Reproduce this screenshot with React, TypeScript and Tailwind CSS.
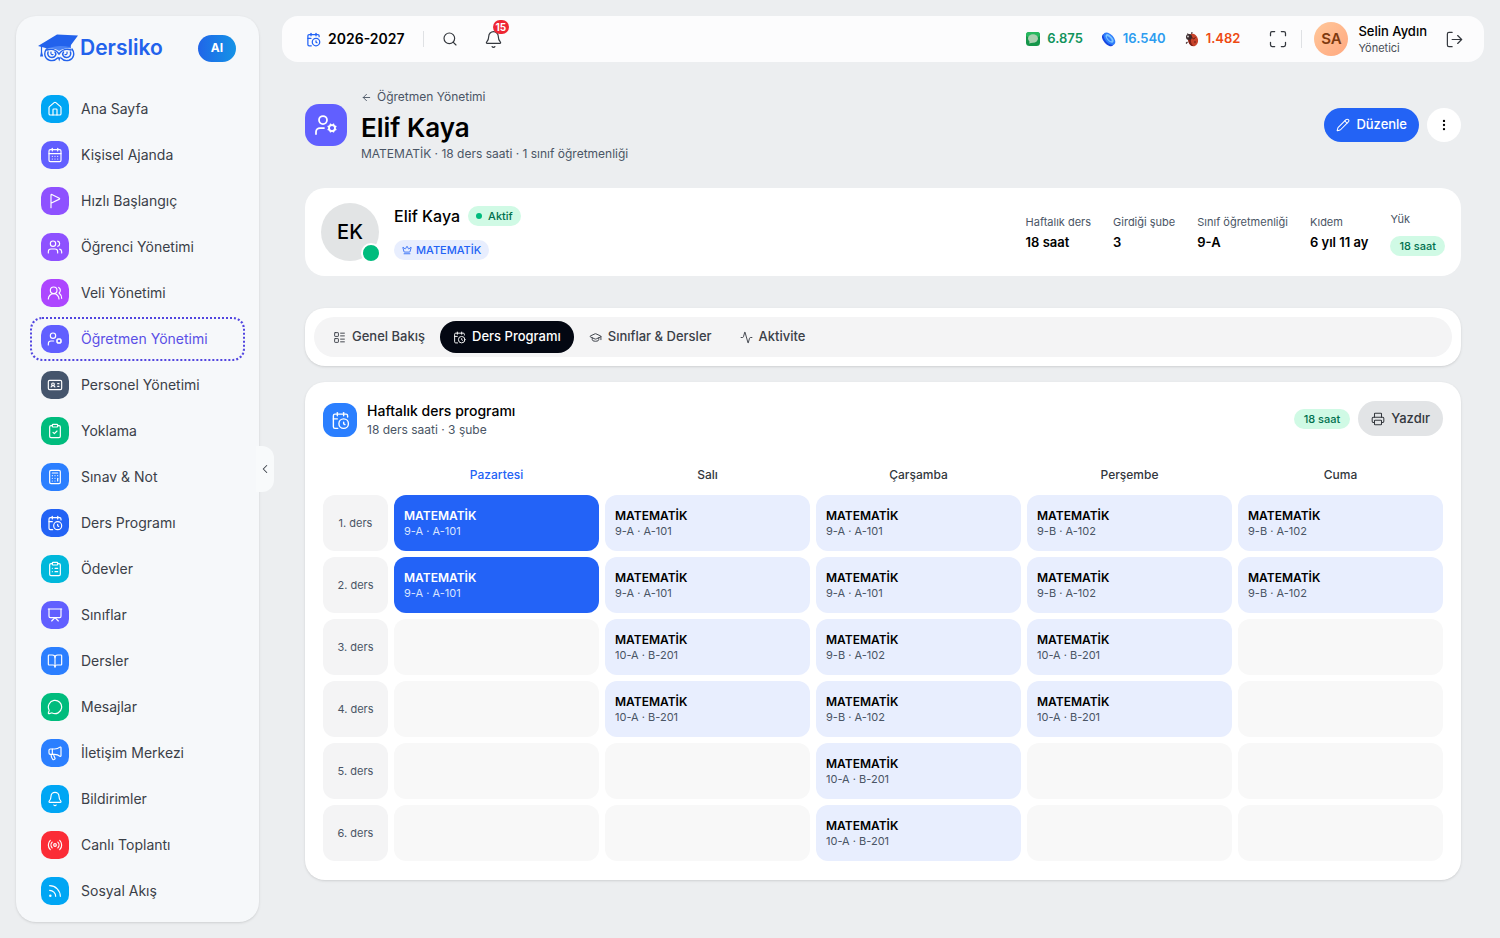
import * as React from 'react';
import {
  Activity, ArrowLeft, Bell, BookOpen, Calculator, CalendarClock, CalendarDays, ChevronLeft, ClipboardCheck,
  ClipboardList, Crown, EllipsisVertical, FlagTriangleRight, GraduationCap, House, IdCard, LayoutList, LogOut,
  Maximize, Megaphone, MessageCircle, Pencil, Presentation, Printer, Radio, Rss, Search, UserCog, Users, UsersRound,
} from 'lucide-react';

const menu = [
  { label: 'Ana Sayfa', icon: House, color: 'bg-[#00a6f4]' },
  { label: 'Kişisel Ajanda', icon: CalendarDays, color: 'bg-[#615fff]' },
  { label: 'Hızlı Başlangıç', icon: FlagTriangleRight, color: 'bg-[#8e51ff]' },
  { label: 'Öğrenci Yönetimi', icon: Users, color: 'bg-[#8e51ff]' },
  { label: 'Veli Yönetimi', icon: UsersRound, color: 'bg-[#ad46ff]' },
  { label: 'Öğretmen Yönetimi', icon: UserCog, color: 'bg-[#615fff]', active: true },
  { label: 'Personel Yönetimi', icon: IdCard, color: 'bg-[#45556c]' },
  { label: 'Yoklama', icon: ClipboardCheck, color: 'bg-[#00bc7d]' },
  { label: 'Sınav & Not', icon: Calculator, color: 'bg-[#2b7fff]' },
  { label: 'Ders Programı', icon: CalendarClock, color: 'bg-[#2363f5]' },
  { label: 'Ödevler', icon: ClipboardList, color: 'bg-[#00b8db]' },
  { label: 'Sınıflar', icon: Presentation, color: 'bg-[#615fff]' },
  { label: 'Dersler', icon: BookOpen, color: 'bg-[#2b7fff]' },
  { label: 'Mesajlar', icon: MessageCircle, color: 'bg-[#00bc7d]' },
  { label: 'İletişim Merkezi', icon: Megaphone, color: 'bg-[#2b7fff]' },
  { label: 'Bildirimler', icon: Bell, color: 'bg-[#00a6f4]' },
  { label: 'Canlı Toplantı', icon: Radio, color: 'bg-[#fb2c36]' },
  { label: 'Sosyal Akış', icon: Rss, color: 'bg-[#00a6f4]' },
];

const stats = [
  { label: 'Haftalık ders', value: '18 saat' },
  { label: 'Girdiği şube', value: '3' },
  { label: 'Sınıf öğretmenliği', value: '9-A' },
  { label: 'Kıdem', value: '6 yıl 11 ay' },
];

const tabs = [
  { label: 'Genel Bakış', icon: LayoutList },
  { label: 'Ders Programı', icon: CalendarClock, active: true },
  { label: 'Sınıflar & Dersler', icon: GraduationCap },
  { label: 'Aktivite', icon: Activity },
];

const days = ['Pazartesi', 'Salı', 'Çarşamba', 'Perşembe', 'Cuma'];

const A = '9-A · A-101';
const B = '9-B · A-102';
const C = '10-A · B-201';
const lessons = [
  [A, A, A, B, B],
  [A, A, A, B, B],
  ['', C, B, C, ''],
  ['', C, B, C, ''],
  ['', '', C, '', ''],
  ['', '', C, '', ''],
];

const Logo = () => (
  <svg viewBox="0 0 40 28" className="h-7 w-10" aria-hidden="true">
    <g fill="none" stroke="#2262ec" strokeLinecap="round">
      <path d="M8.500 15c-3 4-2 10 3 11.300 3 .7 6 0 8-2.300M34 15c3 4 2 10-3 11.300-3 .7-6 0-8-2.300" strokeWidth="1.400" />
      <path d="M10 18c-1 3 1 5.500 4 5.500s5-3 3-5.500M32.500 18c1 3-1 5.500-4 5.500s-5-3-3-5.500" strokeWidth="1.500" />
      <path d="M9 16c4-1.500 9-.5 12 4 3-4.500 8-5.500 12-4" strokeWidth="1.500" />
      <path d="M13 18c-.5 2 .5 3 2 2.500M29 18c.5 2-.5 3-2 2.500" strokeWidth="1.200" />
    </g>
    <path d="M19.500 22.500l1.700 1 1.700-1-1.700 5z" fill="#2262ec" />
    <path d="M9 10l24-1v5.500c-4-.8-8 0-12 2.500-4-2.500-8-3-12-2z" fill="#4a83f5" />
    <path d="M0 12L19 0.500l21 1L31.500 13c-8-2-16-1-22 1.500z" fill="#2262ec" />
    <path d="M3.500 12v7" stroke="#2262ec" strokeWidth="1.200" />
    <path d="M3.500 16l1.700 6.500H2z" fill="#2262ec" />
  </svg>
);

const Gem = () => (
  <svg viewBox="0 0 16 16" className="size-4" aria-hidden="true">
    <rect x="1" y="1" width="14" height="14" rx="3.500" fill="#15964a" />
    <rect x="1" y="1" width="14" height="5" rx="2.500" fill="#28b85f" />
    <ellipse cx="8" cy="7.500" rx="5" ry="4.200" fill="#a9cfb0" />
    <path d="M5 10l-1 2.500 4-1z" fill="#a9cfb0" />
  </svg>
);

const Coin = () => (
  <svg viewBox="0 0 16 16" className="size-4" aria-hidden="true">
    <g transform="rotate(-42 8 8)">
      <ellipse cx="6.500" cy="8" rx="4.200" ry="7.500" fill="#1746e0" />
      <ellipse cx="8.500" cy="8" rx="4.200" ry="7.500" fill="#2f7dfb" />
      <ellipse cx="8.800" cy="8" rx="2.500" ry="5.200" fill="#7cc4ff" />
      <ellipse cx="8.400" cy="8" rx="1.200" ry="3.200" fill="#2f7dfb" />
    </g>
  </svg>
);

const Bug = () => (
  <svg viewBox="0 0 16 16" className="size-4" aria-hidden="true">
    <path d="M5 5L3.500 2.500M7.500 4l.5-3M3.500 11L2 12.500" stroke="#3f2a2a" strokeWidth="1.100" />
    <ellipse cx="9" cy="9" rx="5" ry="6.300" fill="#c8432a" transform="rotate(-12 9 9)" />
    <path d="M4.500 9c0 4 2 6 5 6-2-1.500-3-4-2.500-7z" fill="#7c1f18" />
    <circle cx="5" cy="6" r="3" fill="#3a2b2e" />
    <path d="M7.500 6l2 2 2-1.500" stroke="#5d1a14" strokeWidth="1" fill="none" />
    <circle cx="11" cy="11" r="1" fill="#8d2a1c" />
    <circle cx="4" cy="5.500" r="0.900" fill="#d9d4d4" />
  </svg>
);

const Sidebar = () => (
  <aside className="relative w-[243px] shrink-0 self-start rounded-[20px] bg-[#f6f8fa] px-[14px] pb-[9px] shadow-sm">
    <div className="flex items-center justify-between pt-[18px] pr-[9px] pl-2">
      <a href="#" className="flex items-center gap-0.5 text-[21px] leading-7 font-semibold text-[#2262ec]">
        <Logo />
        Dersliko
      </a>
      <button className="h-[27px] rounded-full bg-linear-to-r from-[#2165e8] to-[#1593e6] px-[13px] text-xs font-bold text-white">AI</button>
    </div>
    <nav className="mt-[25px] flex flex-col gap-[2px]">
      {menu.map(({ label, icon: Icon, color, active }) => (
        <a
          key={label}
          href="#"
          className={`flex h-11 items-center gap-3 rounded-xl border-2 border-dotted px-[9px] text-sm ${active ? 'border-[#5145e0] text-[#5a4fe6]' : 'border-transparent text-[#3b4048]'}`}
        >
          <span className={`flex size-7 items-center justify-center rounded-[10px] text-white ${color}`}>
            <Icon size={16} strokeWidth={1.75} />
          </span>
          {label}
        </a>
      ))}
    </nav>
    <button aria-label="Menüyü daralt" className="absolute top-[430px] -right-[15px] flex h-[46px] w-[18px] items-center justify-center rounded-r-xl bg-[#f8fafb] text-[#3b4048]">
      <ChevronLeft size={14} strokeWidth={1.75} />
    </button>
  </aside>
);

const Topbar = () => (
  <header className="flex h-[46px] items-center justify-between rounded-[16px] bg-[#fcfcfd] pr-5 pl-6">
    <div className="flex items-center">
      <button className="flex items-center gap-[7px] text-sm font-semibold text-black">
        <CalendarClock size={15} className="text-[#2363f5]" />
        2026-2027
      </button>
      <span className="mx-[18px] h-4 w-px bg-[#dfe1e4]" />
      <button aria-label="Ara" className="text-[#33373d]"><Search size={16} strokeWidth={1.75} /></button>
      <button aria-label="Bildirimler" className="relative ml-[26px] text-[#33373d]">
        <Bell size={19} strokeWidth={1.5} />
        <span className="absolute -top-[10px] left-[9px] rounded-full bg-[#ee2633] px-[3px] text-[10px] leading-[14px] font-bold text-white">15</span>
      </button>
    </div>
    <div className="flex items-center">
      <div className="flex items-center gap-[18px] text-[13px] font-semibold">
        <span className="flex items-center gap-1.5 text-[#11935c]"><Gem />6.875</span>
        <span className="flex items-center gap-1.5 text-[#2d9cf0]"><Coin />16.540</span>
        <span className="flex items-center gap-1.5 text-[#ee4a12]"><Bug />1.482</span>
      </div>
      <button aria-label="Tam ekran" className="ml-7 text-[#33373d]"><Maximize size={20} strokeWidth={1.5} /></button>
      <span className="mr-3 ml-[13px] h-[18px] w-px bg-[#dfe1e4]" />
      <button className="flex items-center gap-[10px] text-left">
        <span className="flex size-[34px] items-center justify-center rounded-full bg-linear-to-br from-[#ffc79a] to-[#ffa880] text-[15px] font-semibold text-[#7e3a10]">SA</span>
        <span>
          <span className="block text-[13px] leading-[18px] font-medium text-black">Selin Aydın</span>
          <span className="block text-[11px] leading-4 text-[#4a4f57]">Yönetici</span>
        </span>
      </button>
      <button aria-label="Çıkış" className="ml-[18px] text-[#33373d]"><LogOut size={19} strokeWidth={1.5} /></button>
    </div>
  </header>
);

const Timetable = () => (
  <section className="rounded-[20px] bg-white px-[18px] pt-[19px] pb-[13px] shadow-sm">
    <div className="flex items-start justify-between">
      <div className="flex items-center gap-[10px]">
        <span className="flex size-[34px] items-center justify-center rounded-xl bg-[#2b7fff] text-white"><CalendarClock size={19} strokeWidth={1.75} /></span>
        <div>
          <h2 className="text-sm leading-5 font-medium text-black">Haftalık ders programı</h2>
          <p className="text-xs leading-[18px] text-[#4a5565]">18 ders saati · 3 şube</p>
        </div>
      </div>
      <div className="flex items-center gap-2">
        <span className="rounded-full bg-[#d0fae5] px-[10px] text-[11px] leading-5 font-medium text-[#00704e]">18 saat</span>
        <button className="flex h-[35px] items-center gap-1.5 rounded-full bg-[#e2e4e6] px-[13px] text-[13px] font-medium text-[#33373d]"><Printer size={14} strokeWidth={1.75} />Yazdır</button>
      </div>
    </div>
    <table className="-mx-[6px] mt-5 w-[calc(100%+12px)] table-fixed border-separate border-spacing-x-[6px] border-spacing-y-0">
      <thead>
        <tr className="h-9 text-xs text-[#33373d]">
          <td className="w-[65px]" />
          {days.map((day, i) => (
            <th key={day} scope="col" className={`pb-1 font-medium ${i === 0 ? 'text-[#2363f5]' : ''}`}>{day}</th>
          ))}
        </tr>
      </thead>
      <tbody>
        {lessons.map((row, r) => (
          <tr key={r}>
            <th scope="row" className="pb-[6px] text-[11px] font-normal text-[#4a5565]">
              <div className="flex h-14 items-center justify-center rounded-xl bg-[#f4f4f5]">{r + 1}. ders</div>
            </th>
            {row.map((place, i) => (
              <td key={i} className="pb-[6px]">
                <div className={`flex h-14 flex-col justify-center rounded-xl px-[10px] ${!place ? 'bg-[#f8f8f8]' : i === 0 ? 'bg-[#2363f7] text-white' : 'bg-[#e8eefe] text-black'}`}>
                  {place && (
                    <>
                      <p className="text-xs leading-4 font-semibold">MATEMATİK</p>
                      <p className={`text-[11px] leading-[14px] ${i === 0 ? 'text-[#d8e4ff]' : 'text-[#4a5565]'}`}>{place}</p>
                    </>
                  )}
                </div>
              </td>
            ))}
          </tr>
        ))}
      </tbody>
    </table>
  </section>
);

const App: React.FunctionComponent = () => {
  return (
    <div className="flex min-h-screen gap-[23px] bg-[#eceef0] p-4 font-['Inter','Liberation_Sans',sans-serif]">
      <Sidebar />
      <div className="min-w-0 flex-1">
        <Topbar />
        <main className="px-[23px] pt-[26px]">
          <div className="flex items-center justify-between">
            <div className="flex items-center gap-[14px]">
              <span className="flex size-[42px] items-center justify-center rounded-[14px] bg-[#615fff] text-white"><UserCog size={24} strokeWidth={1.75} /></span>
              <div>
                <a href="#" className="flex items-center gap-[5px] text-xs leading-[18px] text-[#4a5565]"><ArrowLeft size={11} />Öğretmen Yönetimi</a>
                <h1 className="pt-1 text-[26px] leading-9 font-semibold text-black">Elif Kaya</h1>
                <p className="text-xs leading-4 text-[#4a5565]">MATEMATİK · 18 ders saati · 1 sınıf öğretmenliği</p>
              </div>
            </div>
            <div className="flex items-center gap-2">
              <button className="flex h-[34px] items-center gap-1.5 rounded-full bg-[#2363f5] px-3 text-[13px] font-medium text-white"><Pencil size={14} strokeWidth={1.75} />Düzenle</button>
              <button aria-label="Diğer" className="flex size-[34px] items-center justify-center rounded-full bg-white text-black"><EllipsisVertical size={14} /></button>
            </div>
          </div>

          <section className="mt-[26px] flex items-center justify-between rounded-[20px] bg-white px-4 py-[15px]">
            <div className="flex items-center gap-[15px]">
              <div className="relative flex size-[58px] items-center justify-center rounded-full bg-[#e2e4e5] text-xl font-medium text-black">
                EK
                <span className="absolute -right-[2px] -bottom-[2px] size-5 rounded-full border-2 border-white bg-[#00bc7d]" />
              </div>
              <div>
                <div className="flex items-center gap-2">
                  <h2 className="text-base font-medium text-black">Elif Kaya</h2>
                  <span className="flex items-center gap-1.5 rounded-full bg-[#d0fae5] px-2 text-[11px] leading-5 font-medium text-[#00704e]"><i className="size-1.5 rounded-full bg-[#00bc7d]" />Aktif</span>
                </div>
                <span className="mt-3 flex w-fit items-center gap-1 rounded-full bg-[#e8eefe] px-2 text-[11px] leading-5 font-medium text-[#2363f5]"><Crown size={10} />MATEMATİK</span>
              </div>
            </div>
            <dl className="flex items-center gap-[22px]">
              {stats.map((stat) => (
                <div key={stat.label}>
                  <dt className="text-[11px] leading-5 text-[#4a5565]">{stat.label}</dt>
                  <dd className="text-[13px] leading-5 font-semibold text-black">{stat.value}</dd>
                </div>
              ))}
              <div>
                <dt className="text-[11px] leading-5 text-[#4a5565]">Yük</dt>
                <dd className="mt-[7px] rounded-full bg-[#d0fae5] px-[9px] text-[11px] leading-5 font-medium text-[#00704e]">18 saat</dd>
              </div>
            </dl>
          </section>

          <div className="mt-8 rounded-[20px] bg-white p-[9px] shadow-sm">
            <div role="tablist" className="flex h-10 items-center gap-[2px] rounded-full bg-[#f4f4f5] px-[6px]">
              {tabs.map(({ label, icon: Icon, active }) => (
                <button key={label} role="tab" aria-selected={!!active} className={`flex h-8 items-center gap-1.5 rounded-full px-[13px] text-[13px] font-medium ${active ? 'bg-[#030712] text-white' : 'text-[#3b4048]'}`}>
                  <Icon size={13} strokeWidth={1.75} />
                  {label}
                </button>
              ))}
            </div>
          </div>

          <div className="mt-4">
            <Timetable />
          </div>
        </main>
      </div>
    </div>
  );
};

export default App;
